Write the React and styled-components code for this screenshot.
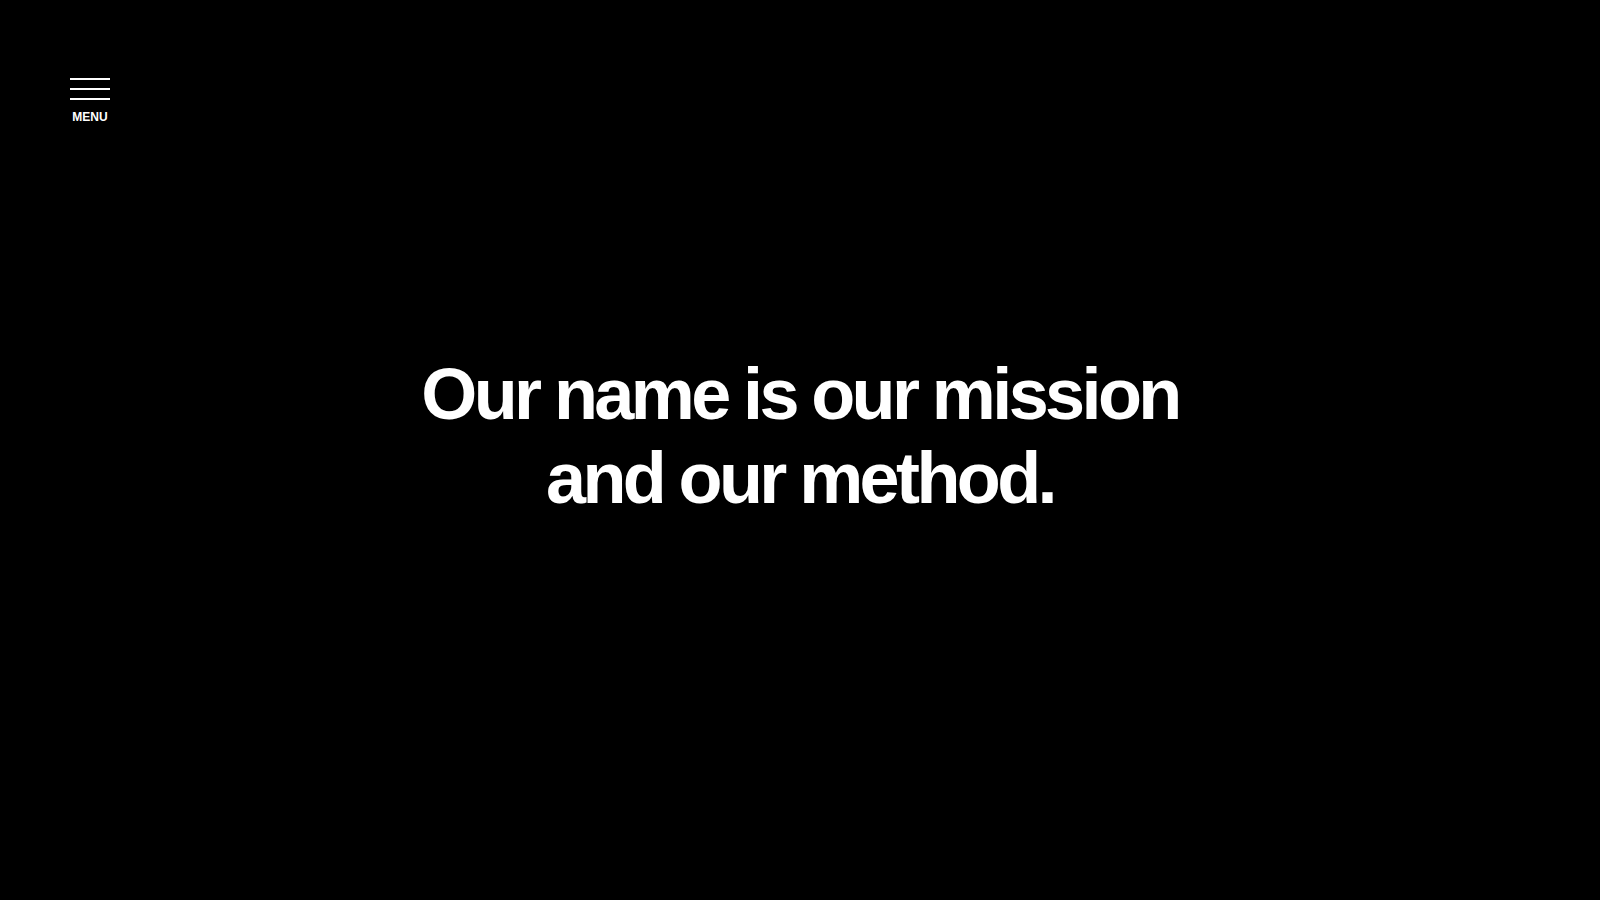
import React from "react";
import styled, { createGlobalStyle } from "styled-components";

const GlobalStyle = createGlobalStyle`
  html, body {
    margin: 0;
    padding: 0;
    background: #000;
    height: 100%;
  }
  #root {
    height: 100%;
  }
`;

const Page = styled.div`
  display: grid;
  grid-template-areas: "stack";
  height: 100vh;
  background: #000;
  color: #fff;
  font-family: "Liberation Sans", Arial, sans-serif;
  overflow: hidden;
`;

const Header = styled.header`
  grid-area: stack;
  align-self: start;
  justify-self: start;
  padding: 78px 0 0 70px;
  z-index: 1;
`;

const MenuButton = styled.button`
  display: flex;
  flex-direction: column;
  align-items: center;
  gap: 0;
  background: none;
  border: none;
  padding: 0;
  color: #fff;
  cursor: pointer;
  font-family: inherit;
`;

const Bars = styled.span`
  display: flex;
  flex-direction: column;
  gap: 8px;
  width: 40px;
`;

const Bar = styled.span`
  display: block;
  height: 2px;
  background: #fff;
`;

const MenuLabel = styled.span`
  margin-top: 10px;
  font-size: 12px;
  font-weight: 700;
  line-height: 14px;
  letter-spacing: 0;
`;

const Hero = styled.main`
  grid-area: stack;
  display: flex;
  align-items: center;
  justify-content: center;
  padding-bottom: 28px;
`;

const Headline = styled.h1`
  margin: 0;
  text-align: center;
  font-size: 72px;
  font-weight: 700;
  line-height: 84px;
  letter-spacing: -3.6px;
  word-spacing: -1px;
`;

export default function App() {
  return (
    <>
      <GlobalStyle />
      <Page>
        <Header>
          <MenuButton aria-label="Menu">
            <Bars>
              <Bar />
              <Bar />
              <Bar />
            </Bars>
            <MenuLabel>MENU</MenuLabel>
          </MenuButton>
        </Header>
        <Hero>
          <Headline>
            Our name is our mission
            <br />
            and our method.
          </Headline>
        </Hero>
      </Page>
    </>
  );
}
